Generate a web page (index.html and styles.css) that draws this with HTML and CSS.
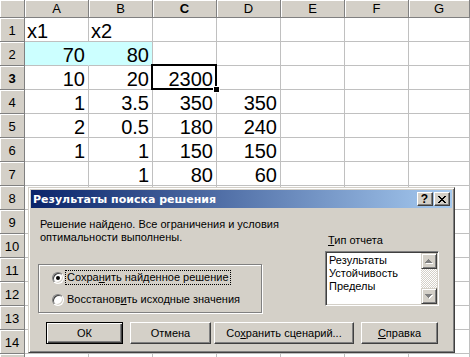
FILE: index.html
```html
<!DOCTYPE html>
<html lang="ru">
<head>
<meta charset="utf-8">
<title>Excel – Результаты поиска решения</title>
<link rel="stylesheet" href="styles.css">
</head>
<body>
<div class="app">
  <div class="sheet">
    <div class="corner"></div>
    <div class="ch">A</div><div class="ch">B</div><div class="ch hl">C</div><div class="ch">D</div><div class="ch">E</div><div class="ch">F</div><div class="ch">G</div>

    <div class="rh">1</div><div class="c l">x1</div><div class="c l">x2</div><div class="c"></div><div class="c"></div><div class="c"></div><div class="c"></div><div class="c"></div>
    <div class="rh">2</div><div class="c cy nb">70</div><div class="c cy">80</div><div class="c"></div><div class="c"></div><div class="c"></div><div class="c"></div><div class="c"></div>
    <div class="rh hl">3</div><div class="c">10</div><div class="c">20</div><div class="c sel">2300</div><div class="c"></div><div class="c"></div><div class="c"></div><div class="c"></div>
    <div class="rh">4</div><div class="c">1</div><div class="c">3.5</div><div class="c">350</div><div class="c">350</div><div class="c"></div><div class="c"></div><div class="c"></div>
    <div class="rh">5</div><div class="c">2</div><div class="c">0.5</div><div class="c">180</div><div class="c">240</div><div class="c"></div><div class="c"></div><div class="c"></div>
    <div class="rh">6</div><div class="c">1</div><div class="c">1</div><div class="c">150</div><div class="c">150</div><div class="c"></div><div class="c"></div><div class="c"></div>
    <div class="rh">7</div><div class="c"></div><div class="c">1</div><div class="c">80</div><div class="c">60</div><div class="c"></div><div class="c"></div><div class="c"></div>
    <div class="rh">8</div><div class="c"></div><div class="c"></div><div class="c"></div><div class="c"></div><div class="c"></div><div class="c"></div><div class="c"></div>
    <div class="rh">9</div><div class="c"></div><div class="c"></div><div class="c"></div><div class="c"></div><div class="c"></div><div class="c"></div><div class="c"></div>
    <div class="rh">10</div><div class="c"></div><div class="c"></div><div class="c"></div><div class="c"></div><div class="c"></div><div class="c"></div><div class="c"></div>
    <div class="rh">11</div><div class="c"></div><div class="c"></div><div class="c"></div><div class="c"></div><div class="c"></div><div class="c"></div><div class="c"></div>
    <div class="rh">12</div><div class="c"></div><div class="c"></div><div class="c"></div><div class="c"></div><div class="c"></div><div class="c"></div><div class="c"></div>
    <div class="rh">13</div><div class="c"></div><div class="c"></div><div class="c"></div><div class="c"></div><div class="c"></div><div class="c"></div><div class="c"></div>
    <div class="rh">14</div><div class="c"></div><div class="c"></div><div class="c"></div><div class="c"></div><div class="c"></div><div class="c"></div><div class="c"></div>
    <div class="rh"></div><div class="c"></div><div class="c"></div><div class="c"></div><div class="c"></div><div class="c"></div><div class="c"></div><div class="c"></div>
  </div>

  <div class="dialog">
    <div class="titlebar">
      <span class="title">Результаты поиска решения</span>
      <div class="tbtns">
        <span class="tbtn q">?</span>
        <span class="tbtn"><svg width="8" height="7" viewBox="0 0 8 7" shape-rendering="crispEdges"><path d="M0 0h2v1H0z M6 0h2v1H6z M1 1h2v1H1z M5 1h2v1H5z M2 2h4v1H2z M3 3h2v1H3z M2 4h4v1H2z M1 5h2v1H1z M5 5h2v1H5z M0 6h2v1H0z M6 6h2v1H6z" fill="#000"/></svg></span>
      </div>
    </div>
    <div class="dbody">
      <div class="main">
        <div class="left">
          <p class="msg">Решение найдено. Все ограничения и условия<br>оптимальности выполнены.</p>
          <div class="group">
            <div class="radio"><span class="rb on"></span><span class="rl focus">Сохра<u>н</u>ить найденное решение</span></div>
            <div class="radio"><span class="rb"></span><span class="rl">Восстанов<u>и</u>ть исходные значения</span></div>
          </div>
        </div>
        <div class="right">
          <div class="lbl"><u>Т</u>ип отчета</div>
          <div class="listbox">
            <div class="items">
              <div>Результаты</div>
              <div>Устойчивость</div>
              <div>Пределы</div>
            </div>
            <div class="vscroll">
              <span class="sbtn"><svg width="8" height="5" viewBox="0 0 8 5" shape-rendering="crispEdges"><path transform="translate(1 1)" d="M3 0h1v1h1v1h1v1h1v1H0V3h1V2h1V1h1z" fill="#fff"/><path d="M3 0h1v1h1v1h1v1h1v1H0V3h1V2h1V1h1z" fill="#808080"/></svg></span>
              <span class="track"></span>
              <span class="sbtn"><svg width="8" height="5" viewBox="0 0 8 5" shape-rendering="crispEdges"><path transform="translate(1 1)" d="M0 0h7v1h-1v1h-1v1h-1v1h-1v-1h-1v-1h-1v-1h-1z" fill="#fff"/><path d="M0 0h7v1h-1v1h-1v1h-1v1h-1v-1h-1v-1h-1v-1h-1z" fill="#808080"/></svg></span>
            </div>
          </div>
        </div>
      </div>
      <div class="buttons">
        <span class="btn def b-ok">ОК</span>
        <span class="btn b-cancel">Отмена</span>
        <span class="btn b-save">Со<u>х</u>ранить сценарий...</span>
        <span class="btn b-help"><u>С</u>правка</span>
      </div>
    </div>
  </div>
</div>
</body>
</html>
```

FILE: styles.css
```css
* { box-sizing: border-box; }
html, body { margin: 0; padding: 0; }
body {
  width: 470px;
  height: 357px;
  overflow: hidden;
  background: #fff;
  font-family: "Liberation Sans", Arial, sans-serif;
  color: #000;
}
.app { position: relative; width: 470px; height: 357px; overflow: hidden; }

/* spreadsheet */
.sheet {
  display: grid;
  grid-template-columns: 25px repeat(6, 64px) 61px;
  grid-template-rows: 18px repeat(15, 24px);
}
.corner, .ch, .rh {
  background: #d4d0c8;
  border-right: 1px solid #808080;
  border-bottom: 1px solid #808080;
  box-shadow: inset 1px 1px #fff;
  font-size: 13px;
  line-height: 15px;
  display: flex;
  justify-content: center;
}
.ch { align-items: center; }
.rh { align-items: flex-end; padding-bottom: 3px; }
.hl { font-weight: bold; }

.c {
  border-right: 1px solid #c0c0c0;
  border-bottom: 1px solid #c0c0c0;
  font-size: 20px;
  line-height: 20px;
  display: flex;
  align-items: flex-end;
  justify-content: flex-end;
  padding: 0 3px 0 2px;
  white-space: nowrap;
}
.c.l { justify-content: flex-start; }
.c.cy { background: #ccffff; }
.c.nb { border-right-color: #ccffff; }
.c.sel { position: relative; }
.c.sel::after {
  content: "";
  position: absolute;
  left: -2px; top: -2px; right: -1px; bottom: -1px;
  border: 2px solid #000;
}
.c.sel::before {
  content: "";
  position: absolute;
  right: -4px; bottom: -4px;
  width: 5px; height: 5px;
  box-sizing: content-box;
  background: #000;
  border: 1px solid #fff;
  z-index: 1;
}

/* dialog */
.dialog {
  position: absolute;
  left: 28px;
  top: 187px;
  width: 427px;
  height: 166px;
  background: #d4d0c8;
  border: 1px solid;
  border-color: #d4d0c8 #404040 #404040 #d4d0c8;
  box-shadow: inset 1px 1px #fff, inset -1px -1px #808080;
  padding: 2px;
  font-size: 11px;
  line-height: 13px;
  display: flex;
  flex-direction: column;
}
.titlebar {
  height: 18px;
  display: flex;
  align-items: center;
  padding-left: 2px;
  background: linear-gradient(to right, #0a246a, #a6caf0);
}
.title {
  color: #fff;
  font-family: "DejaVu Sans", "Liberation Sans", sans-serif;
  font-weight: bold;
  font-size: 11px;
  white-space: nowrap;
}
.tbtns { margin-left: auto; margin-right: 2px; display: flex; gap: 1px; }
.tbtn {
  width: 16px;
  height: 14px;
  background: #d4d0c8;
  border: 1px solid;
  border-color: #fff #404040 #404040 #fff;
  box-shadow: inset -1px -1px #808080;
  display: flex;
  align-items: center;
  justify-content: center;
}
.tbtn.q { font-weight: bold; font-size: 12px; line-height: 12px; padding-right: 1px; }

.dbody { display: flex; flex-direction: column; }
.main { display: flex; }
.left { width: 294px; }
.msg { margin: 10px 0 0 9px; white-space: nowrap; }
.group {
  margin: 20px 0 0 7px;
  width: 224px;
  height: 49px;
  border: 1px solid #808080;
  box-shadow: inset 1px 1px #fff, 1px 1px #fff;
  padding: 6px 0 0 13px;
  display: flex;
  flex-direction: column;
  gap: 9px;
}
.radio { display: flex; align-items: center; height: 13px; }
.rb {
  width: 12px;
  height: 12px;
  border-radius: 50%;
  background: #fff;
  border: 1px solid;
  border-color: #808080 #fff #fff #808080;
  box-shadow: inset 1px 1px #404040, inset -1px -1px #d4d0c8;
  display: flex;
  align-items: center;
  justify-content: center;
  flex: none;
}
.rb.on::after { content: ""; width: 4px; height: 4px; border-radius: 50%; background: #000; }
.rl { margin-left: 1px; padding: 0 1px; border: 1px solid transparent; white-space: nowrap; }
.rl.focus { border: 1px dotted #000; }

.right { width: 114px; }
.lbl { margin-top: 26px; padding-left: 3px; }
.listbox {
  margin-top: 4px;
  height: 55px;
  display: flex;
  background: #fff;
  border: 1px solid;
  border-color: #808080 #fff #fff #808080;
  box-shadow: inset 1px 1px #404040, inset -1px -1px #d4d0c8;
  padding: 1px;
}
.items { flex: 1; padding: 1px 0 0 2px; }
.vscroll { width: 16px; display: flex; flex-direction: column; }
.sbtn {
  height: 16px;
  background: #d4d0c8;
  border: 1px solid;
  border-color: #d4d0c8 #404040 #404040 #d4d0c8;
  box-shadow: inset 1px 1px #fff, inset -1px -1px #808080;
  display: flex;
  align-items: center;
  justify-content: center;
}
.track {
  flex: 1;
  background: repeating-conic-gradient(#d4d0c8 0 25%, #fff 0 50%) 0 0 / 2px 2px;
}

.buttons { display: flex; margin-top: 9px; padding-left: 15px; }
.btn {
  height: 22px;
  background: #d4d0c8;
  border: 1px solid;
  border-color: #fff #404040 #404040 #fff;
  box-shadow: inset -1px -1px #808080;
  display: flex;
  align-items: center;
  justify-content: center;
  white-space: nowrap;
}
.btn.def {
  border-color: #000;
  box-shadow: inset 1px 1px #fff, inset -1px -1px #404040, inset -2px -2px #808080;
}
.b-ok { width: 77px; }
.b-cancel { width: 81px; margin-left: 7px; }
.b-save { width: 140px; margin-left: 3px; }
.b-help { width: 77px; margin-left: 7px; }
```
